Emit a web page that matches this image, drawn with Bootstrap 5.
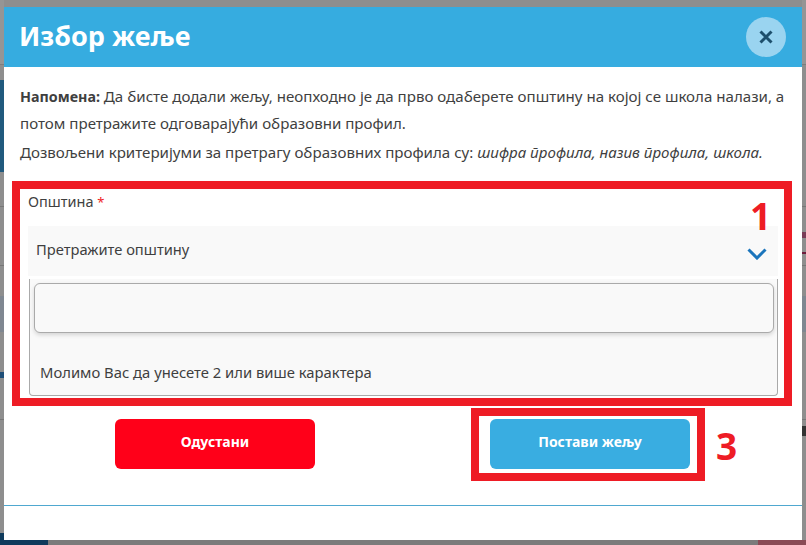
<!DOCTYPE html>
<html lang="sr">
<head>
<meta charset="utf-8">
<title>Избор жеље</title>
<link href="https://cdn.jsdelivr.net/npm/bootstrap@5.3.0/dist/css/bootstrap.min.css" rel="stylesheet">
<style>
html,body{height:100%;margin:0;overflow:hidden}
body{background:#8e8e8e;font-family:"Noto Sans","Open Sans",sans-serif;color:#3f3f3f;position:relative;font-size:14px}
.backdrop-bit{position:absolute}
.edge-left{left:0;top:0;width:4px;height:545px;background:linear-gradient(#959595 0 64px,#7d7d7d 64px 65px,#8e8e8e 65px 80px,#215a7e 80px 172px,#8e8e8e 172px 206px,#777 206px 207px,#8e8e8e 207px 265px,#777 265px 266px,#8e8e8e 266px 296px,#7f8791 296px 332px,#8e8e8e 332px 372px,#1f4f78 372px 378px,#8e8e8e 378px 419px,#777 419px 420px,#8e8e8e 420px 533px,#0f3a5c 533px)}
.edge-right{right:0;top:0;width:4px;height:545px;background:linear-gradient(#959595 0 64px,#7d7d7d 64px 65px,#8e8e8e 65px 206px,#777 206px 207px,#8e8e8e 207px 232px,#7a3c57 232px 238px,#8e8e8e 238px 252px,#6e1c3c 252px 254px,#8e8e8e 254px 265px,#777 265px 266px,#8e8e8e 266px 296px,#7f8791 296px 332px,#8e8e8e 332px 419px,#777 419px 420px,#8e8e8e 420px 426px,#333 426px 436px,#8e8e8e 436px 540px,#8a4a55 540px)}
.edge-bottom{left:0;top:540px;width:806px;height:5px;background:linear-gradient(90deg,#0f3a5c 0 48px,#7b7b7b 48px 758px,#8a4a55 758px)}
.wish-shell{position:absolute;left:4px;top:7px;width:798px;height:533px;border:0;border-radius:0;background:#fff;display:flex;flex-direction:column;z-index:1}
.wish-head{background:#36ace0;height:60px;padding:0 16px;border:0;border-radius:0;display:flex;align-items:center;justify-content:space-between}
.wish-title{font-size:27px;font-weight:700;color:#fff;margin:0 0 3px -1px;line-height:1}
.wish-close{width:40px;height:40px;border:0;border-radius:50%;background:#9ad4f0;padding:0;display:flex;align-items:center;justify-content:center}
.wish-body{padding:16px 16px 0;flex:1 1 auto}
.wish-note{margin:0 0 3px;line-height:26px;font-size:15.1px}
.wish-note2{margin:0;line-height:26px;font-size:15.1px}
.wish-note b{font-weight:700;font-size:14.3px}
.wish-field{margin-top:26px;padding:0 8px}
.wish-label{font-size:14.5px;line-height:20px;margin-bottom:14px}
.wish-star{color:#ef1c25;font-size:13px}
.wish-select{background:#f9f9f9;height:50px;display:flex;align-items:center;justify-content:space-between;padding:0 11px 3px 8px;font-size:14.7px}
.wish-chev{margin-top:8px}
.wish-drop{background:#f9f9f9;margin:3px 0 0 1px;height:117px;border:1px solid #aaa;border-top:0;border-radius:0 0 4px 4px;padding:4px 3px 0 4px}
.wish-input{height:50px;border:1px solid #aaa;border-radius:6px;box-shadow:0 2px 4px rgba(0,0,0,.15);background:#f9f9f9;width:100%;display:block}
.wish-hint{margin:29px 0 0 6px;font-size:14.8px;line-height:20px}
.wish-actions{display:flex;justify-content:space-between;padding:0 96px 0 95px;margin-top:23px}
.wish-btn{width:200px;height:50px;border:0;border-radius:6px;color:#fff;font-weight:700;font-size:14px;padding:0 0 5px}
.wish-cancel,.wish-cancel:hover{background:#ff0019;color:#fff}
.wish-save,.wish-save:hover{background:#39ade1;color:#fff}
.wish-rule{height:1px;background:#4fa8d0;margin:36px -16px 0}
.ann-box{position:absolute;border:8px solid #ee1c25;z-index:2;pointer-events:none}
.ann-one{left:12px;top:181px;width:780px;height:225px}
.ann-two{left:471px;top:408px;width:234px;height:73px}
.ann-num{position:absolute;color:#ee1c25;font-weight:700;font-size:37px;line-height:1;z-index:3;font-family:"Open Sans",sans-serif}
.ann-n1{left:750px;top:197px}
.ann-n3{left:716px;top:427px}
</style>
</head>
<body>
<div class="backdrop-bit edge-left"></div>
<div class="backdrop-bit edge-right"></div>
<div class="backdrop-bit edge-bottom"></div>
<div class="modal-content wish-shell">
  <div class="modal-header wish-head">
    <h1 class="modal-title wish-title">Избор жеље</h1>
    <button type="button" class="wish-close" aria-label="Затвори">
      <svg width="14" height="14" viewBox="0 0 14 14"><path d="M1.5 1.5 12.5 12.5M12.5 1.5 1.5 12.5" stroke="#1d4f6c" stroke-width="3" fill="none"/></svg>
    </button>
  </div>
  <div class="modal-body wish-body">
    <p class="wish-note"><b>Напомена:</b> Да бисте додали жељу, неопходно је да прво одаберете општину на којој се школа налази, а потом претражите одговарајући образовни профил.</p>
    <p class="wish-note2">Дозвољени критеријуми за претрагу образовних профила су: <em>шифра профила, назив профила, школа.</em></p>
    <div class="wish-field">
      <div class="wish-label">Општина <span class="wish-star">*</span></div>
      <div class="wish-select"><span>Претражите општину</span>
        <svg class="wish-chev" width="20" height="12" viewBox="0 0 20 12"><path d="M1.5 1.5 10 10 18.5 1.5" stroke="#1b75bc" stroke-width="3" fill="none"/></svg>
      </div>
      <div class="wish-drop">
        <input class="wish-input" type="text" aria-label="Претрага">
        <div class="wish-hint">Молимо Вас да унесете 2 или више карактера</div>
      </div>
    </div>
    <div class="wish-actions">
      <button type="button" class="btn wish-btn wish-cancel">Одустани</button>
      <button type="button" class="btn wish-btn wish-save">Постави жељу</button>
    </div>
    <div class="wish-rule"></div>
  </div>
</div>
<div class="ann-box ann-one"></div>
<div class="ann-box ann-two"></div>
<div class="ann-num ann-n1">1</div>
<div class="ann-num ann-n3">3</div>
<script src="https://cdn.jsdelivr.net/npm/bootstrap@5.3.0/dist/js/bootstrap.bundle.min.js"></script>
</body>
</html>
